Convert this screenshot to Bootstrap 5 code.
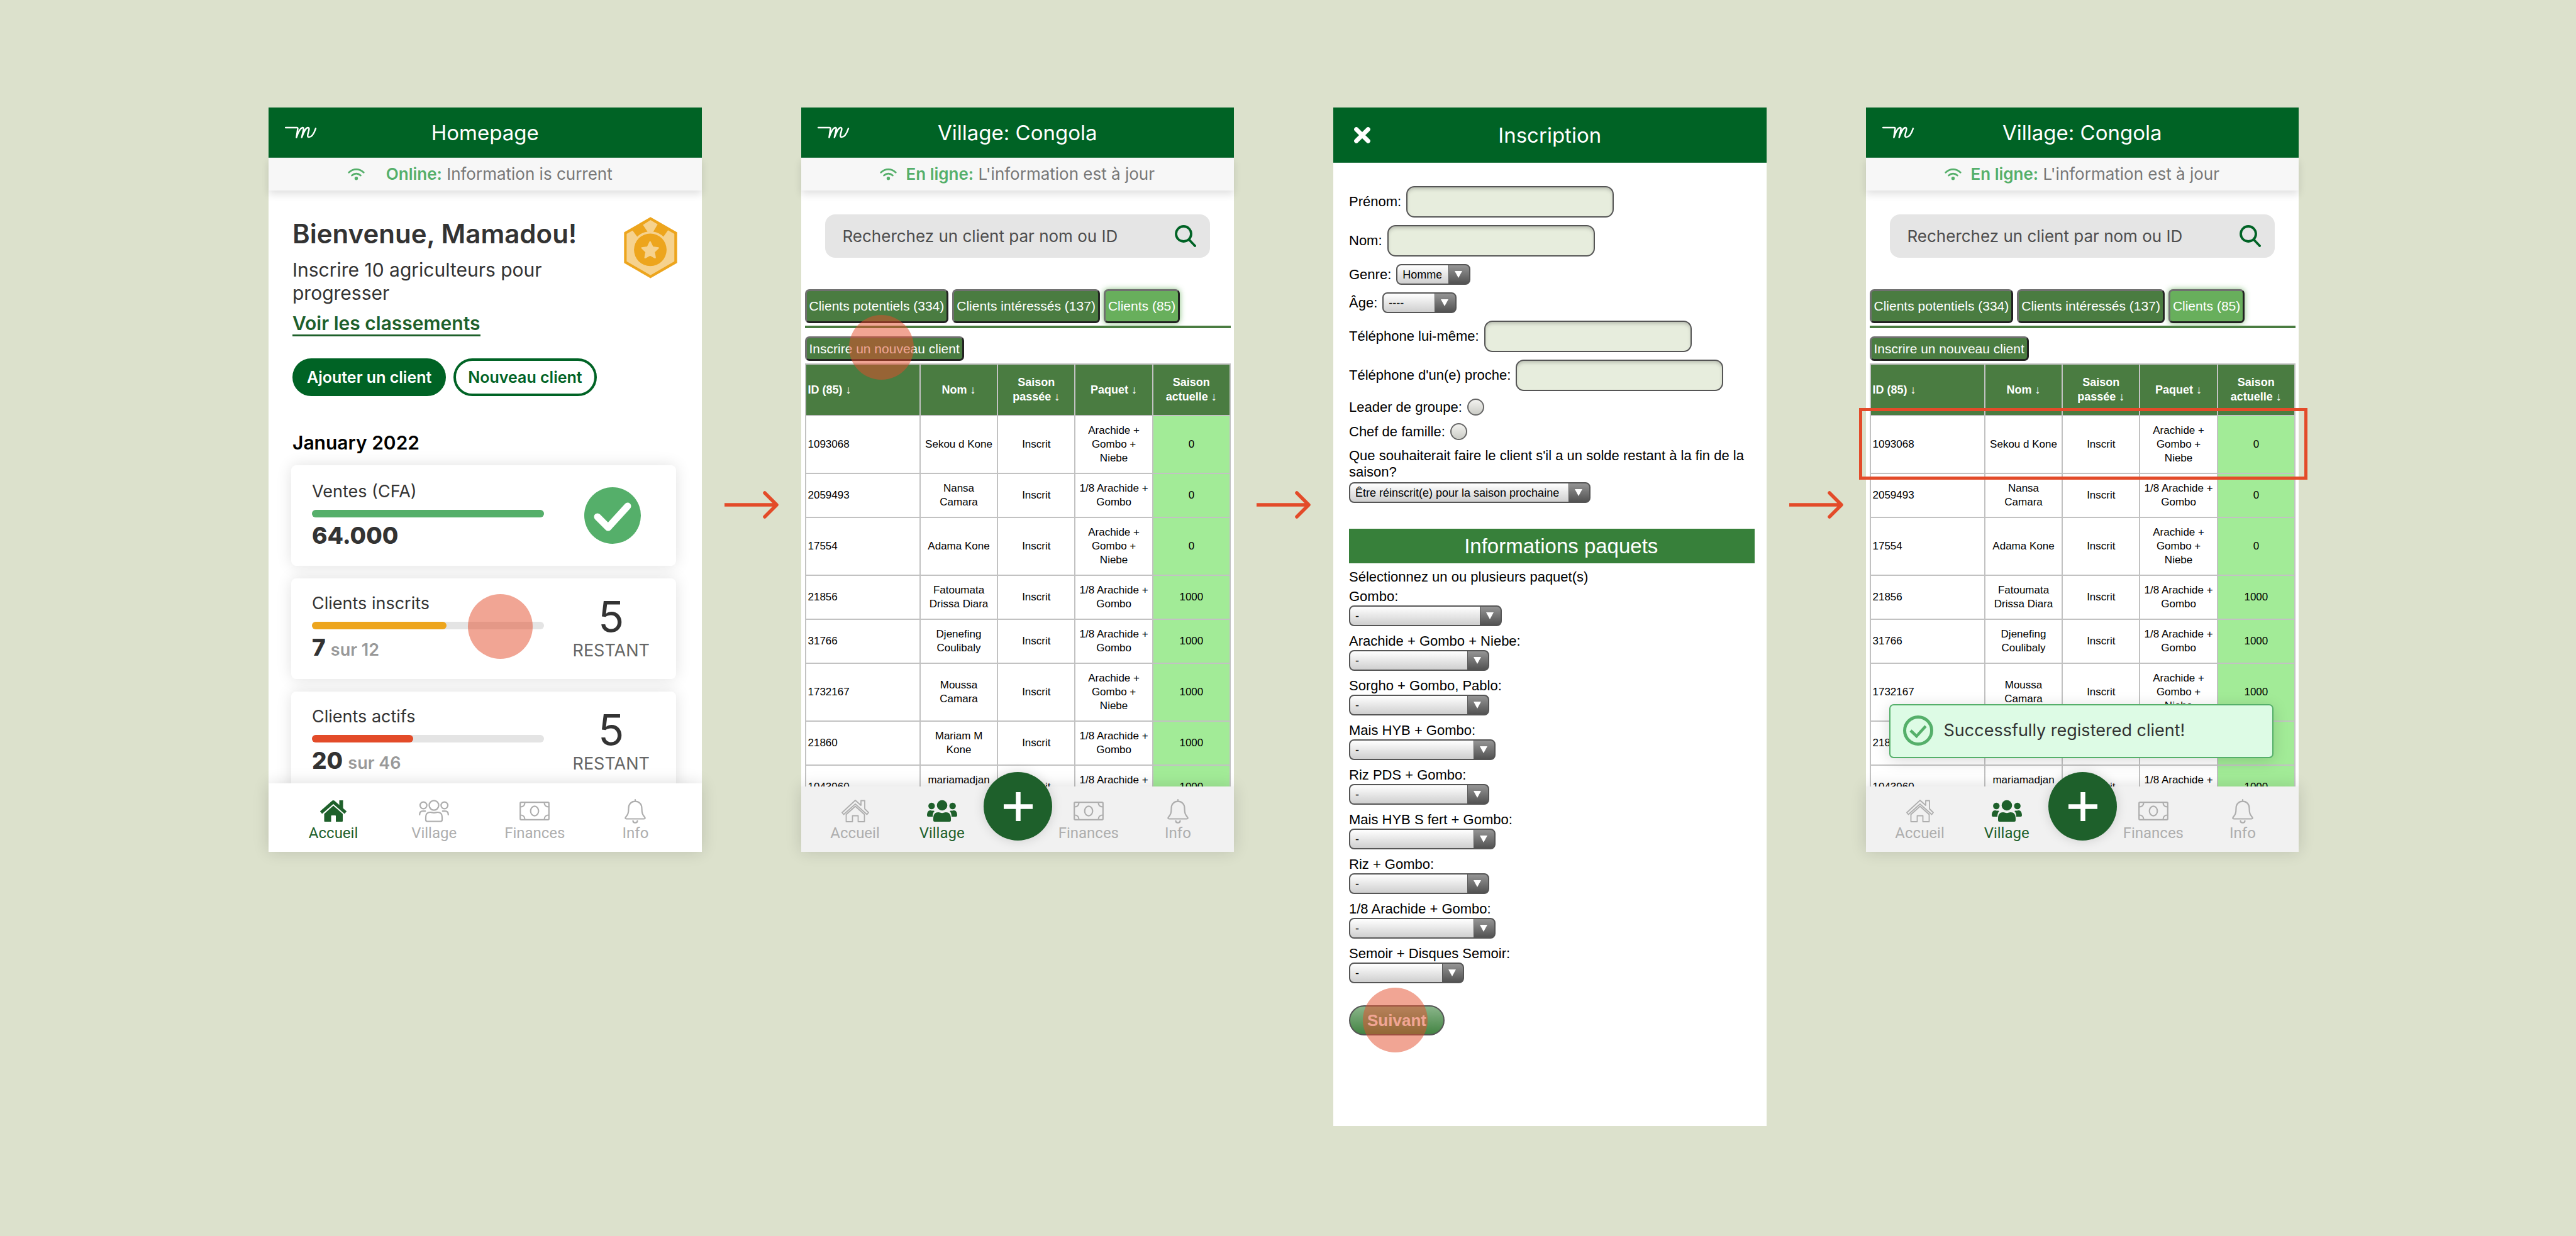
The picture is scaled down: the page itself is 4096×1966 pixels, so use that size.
<!DOCTYPE html>
<html lang="fr">
<head>
<meta charset="utf-8">
<meta name="viewport" content="width=device-width, initial-scale=1">
<title>Parcours d'inscription d'un client</title>
<link href="https://cdn.jsdelivr.net/npm/bootstrap@5.3.0/dist/css/bootstrap.min.css" rel="stylesheet">
<style>
  :root {
    --brand: #006325;
    --brand-dark: #1e602b;
    --ok: #55af6a;
    --alert: #e34b29;
    --tab: #4a7c41;
    --ink: #333;
  }
  body { background: #dce1cc; font-family: Inter, "Liberation Sans", sans-serif; color: var(--ink); }
  .flow { padding: 171px 441px 0 427px; }
  .link-arrow { flex: 0 0 158px; padding-top: 610px; }
  .phone { flex: 1 1 0; min-width: 0; background: #fff; }
  .phone-short { height: 1184px; }
  .screen { min-height: 0; }
  .topbar { height: 80px; background: var(--brand); color: #fff; border-bottom: 1px solid #2f7d4d; }
  .topbar-tall { height: 88px; }
  .topbar h1 { font-size: 33px; line-height: 40px; font-weight: 400; }
  .topbar .corner { left: 26px; top: 0; height: 100%; }
  .status { height: 52px; background: #f7f7f7; color: #777; font-size: 26px; line-height: 32px; box-shadow: 0 6px 12px rgba(0,0,0,.12); z-index: 2; }
  .status svg, .status strong, .toast-ok svg { color: var(--ok); }
  .status strong { font-weight: 600; }
  .status-wide { gap: 34px; padding-right: 16px; }
  .status-near { gap: 14px; }

  .intro { padding: 42px 39px 0 38px; }
  .intro h2 { font-size: 42px; line-height: 54px; font-weight: 600; }
  .intro p { font-size: 30px; line-height: 37px; margin: 12px 0 12px; }
  .ranking { font-size: 30px; line-height: 35px; font-weight: 600; color: var(--brand-dark); border-bottom: 3px solid var(--brand-dark); }
  .pills { gap: 12px; margin-top: 35px; }
  .pill { height: 60px; border-radius: 30px; border: 4px solid var(--brand); font-size: 25px; line-height: 30px; font-weight: 600; padding: 0 19px; color: var(--brand); }
  .pill-full { background: var(--brand); color: #fff; }
  .month { font-size: 30px; line-height: 37px; font-weight: 600; color: #000; margin: 56px 0 17px; }
  .stats { padding: 0 41px 0 36px; gap: 20px; }
  .stat { height: 160px; border-radius: 8px; padding: 0 0 0 33px; box-shadow: 0 0 24px rgba(0,0,0,.12); background: #fff; flex: none; }
  .stat-name { font-size: 27px; line-height: 32px; }
  .meter { width: 369px; height: 12px; border-radius: 6px; background: #e4e4e4; margin: 13px 0 7px; }
  .meter > div { border-radius: 6px; }
  .stat-num { font-size: 37px; line-height: 44px; font-weight: 800; }
  .stat-num small { font-size: 27px; font-weight: 600; color: #999; }
  .left-count { padding-bottom: 4px; }
  .left-num { font-size: 68px; line-height: 68px; }
  .left-word { font-size: 27px; line-height: 32px; margin-top: 5px; color: #666; }
  .fill-green { background: var(--ok); }
  .fill-amber { background: #eda51d; }
  .fill-red { background: var(--alert); }

  .tabbar { padding-bottom: 18px; z-index: 3; box-shadow: 0 0 24px rgba(0,0,0,.14); font-size: 24px; line-height: 24px; }
  .tabbar a { color: #aeaeae; text-decoration: none; font-family: Roboto, Inter, sans-serif; }
  .tabbar a.on { color: var(--brand-dark); }
  .tabbar .ico { height: 40px; margin-bottom: 3px; }
  .tabbar-home { height: 109px; background: #fff; padding-left: 23px; padding-right: 25px; }
  .tabbar-village { height: 104px; background: #f1f1f1; }
  .w-1 { flex: 152 0 0; padding-left: 10px; } .w-2 { flex: 124 0 0; } .w-3 { flex: 118 0 0; } .w-4 { flex: 106 0 0; } .w-5 { flex: 178 0 0; }
  .add { width: 109px; height: 109px; flex: none; border: 0; border-radius: 50%; background: var(--brand-dark); box-shadow: 0 0 18px rgba(0,0,0,.15); }

  .search { margin: 38px 38px 0; height: 69px; border-radius: 16px; background: #e5e5e5; padding: 0 22px 0 28px; }
  .search input { border: 0; background: none; outline: 0; font-size: 26px; color: #4d4d4d; min-width: 0; padding: 0; }
  .search input::placeholder { color: #4d4d4d; opacity: 1; }
  .search svg { color: var(--brand); }
  .legacy { font-family: "Liberation Sans", Arial, sans-serif; color: #000; }
  .village { padding: 0 5px 0 6px; }
  .tabs { margin-top: 50px; gap: 6px; }
  .lbtn { font-size: 21px; line-height: 24px; color: #fff; background: var(--tab); border: 3px solid; border-color: #707070 #222 #222 #707070; border-radius: 7px; padding: 0 4px; height: 54px; white-space: nowrap; }
  .lbtn-on { background: #68af5c; box-shadow: 0 0 10px rgba(104,175,92,.8); }
  .lbtn-low { height: 39px; }
  .rule { height: 4px; background: var(--tab); margin: 4px 0 13px; }
  .clients { width: 100%; table-layout: fixed; border-collapse: collapse; font-size: 17px; line-height: 22px; text-align: center; margin-top: 4px; }
  .clients th { background: var(--tab); color: #fff; height: 82px; font-size: 18px; line-height: 23px; padding: 0 4px; }
  .clients th, .clients td { border: 2px solid #c2c2c2; vertical-align: middle; }
  .clients td { padding: 12px 1px; white-space: nowrap; }
  .clients th:first-child, .clients td:first-child { text-align: left; padding-left: 3px; }
  .clients td:last-child { background: #a2eb97; }
  .clients .c1 { width: 27%; }

  .tap { width: 103px; height: 103px; border-radius: 50%; background: rgba(227,75,41,.5); z-index: 5; pointer-events: none; }
  .tap-stat { left: 281px; top: 25px; }
  .tap-new { left: 70px; top: -34px; }
  .tap-next { left: 22px; top: -28px; }

  .form { padding: 37px 19px 144px 25px; }
  .fields { gap: 12px; }
  .line { gap: 8px; font-size: 22px; line-height: 26px; }
  .box { width: 330px; height: 50px; border: 2px solid #555; border-radius: 13px; background: #e7eddd; box-shadow: inset 0 4px 6px -2px rgba(0,0,0,.25); padding: 0 12px; }
  .pick { appearance: none; height: 33px; border: 2px solid #555; border-radius: 8px; font-size: 18px; line-height: 22px; color: #000; padding: 0 44px 0 8px;
    background:
      url("data:image/svg+xml,%3Csvg xmlns='http://www.w3.org/2000/svg' width='12' height='11'%3E%3Cpath d='M0 0h12l-6 11z' fill='%23fff'/%3E%3C/svg%3E") no-repeat right 11px center,
      linear-gradient(#555, #555) no-repeat right 32px top / 1px 100%,
      linear-gradient(#959595, #525252) no-repeat right top / 33px 100%,
      linear-gradient(#fff, #cfcfcf); }
  .pick-a { width: 118px; } .pick-b { width: 384px; } .pick-c { width: 243px; } .pick-d { width: 223px; } .pick-e { width: 233px; } .pick-f { width: 183px; }
  .dot { appearance: none; width: 27px; height: 27px; border: 2px solid #666; border-radius: 50%; background: linear-gradient(#f3f3f0, #cbccc6); margin: 0; }
  .long-label { font-size: 22px; line-height: 26px; margin: 0 0 -9px; }
  .banner { background: #37803a; color: #fff; font-size: 33px; line-height: 55px; font-weight: 400; text-align: center; padding-left: 30px; margin: 41px 0 9px; }
  .pack { font-size: 22px; line-height: 26px; }
  .packs { gap: 11px; margin-top: 5px; }
  .packs label { margin-bottom: 1px; }
  .send { margin-top: 35px; }
  .next { height: 48px; width: 152px; border: 2px solid #555; border-radius: 24px; background: linear-gradient(#8ab58a, #438443); color: #fff; font-size: 26px; line-height: 30px; font-weight: 700; padding: 0; }

  .toast-ok { left: 37px; right: 40px; top: 949px; height: 86px; border: 2px solid var(--ok); border-radius: 7px; background: #ddfbe5; box-shadow: 0 4px 24px rgba(0,0,0,.15); font-size: 27px; line-height: 32px; gap: 17px; padding: 0 0 3px 20px; z-index: 2; }
  .focus-row { left: -11px; right: -14px; top: 478px; height: 114px; border: 5px solid var(--alert); z-index: 4; }
</style>
</head>
<body>
<svg width="0" height="0" class="d-none" aria-hidden="true">
  <symbol id="i-logo" viewBox="0 0 50 20"><path d="M1 2.6h17.500c1.200 0 1.700.8 1.500 2L18 18c2-6 5.200-14.500 9.200-15.300 2.800-.4 1.800 3.300 1 6.500L26.200 18c2.500-6.500 5.500-14.800 9.500-15.300 2.900-.2 2 3.200 1.100 6.300-.9 3-2.700 8.500.7 8.500 4.800 0 8.500-7.500 10.500-13.500" fill="none" stroke="currentColor" stroke-width="2.400" stroke-linecap="round" stroke-linejoin="round"/></symbol>
  <symbol id="i-wifi" viewBox="0 0 27 20"><g fill="none" stroke="currentColor" stroke-width="2.800" stroke-linecap="round"><path d="M1.800 7.200c7-6.400 16.400-6.400 23.400 0"/><path d="M6.600 12c4.300-3.800 9.500-3.800 13.800 0"/></g><circle cx="13.500" cy="16.800" r="2.700" fill="currentColor"/></symbol>
  <symbol id="i-medal" viewBox="46 25 269 309"><path fill="#eda51d" d="M180 25l134 77v154l-134 77-133-77V102z"/><path fill="#f6d28e" d="M60 110l30-17 23 31q20-20 52-25l-23-34 38-25 36 22-22 37q30 5 51 25l23-32 32 18v138l-120 70-120-70z"/><circle cx="179" cy="190" r="82" fill="#eda51d"/><path d="M178 150l12.500 26.500 29 4-21 20.500 5 29-25.500-14-25.500 14 5-29-21-20.500 29-4z" fill="#f6d28e" stroke="#f6d28e" stroke-width="7" stroke-linejoin="round"/></symbol>
  <symbol id="i-home-on" viewBox="0 0 44 36"><path d="M2.500 20.500L22 3.500l19.500 17" fill="none" stroke="currentColor" stroke-width="5" stroke-linejoin="round"/><path fill="currentColor" d="M31.500 1h6v14l-6-5zM22 9.500l15 13V34q0 1-1 1H26V26q0-1-1-1h-5.500q-1 0-1 1v9H8.500q-1 0-1-1V22.500z"/></symbol>
  <symbol id="i-home" viewBox="0 0 44 36"><g fill="none" stroke="currentColor" stroke-width="1.800" stroke-linejoin="round"><path d="M1 20.500L22 1l9 8V1.500h6v13l6 6-2.500 3L22 6.800 3.500 23.500z"/><path d="M7.500 23.500V35h10V25.500h9V35h10V23.500L22 10.500z"/></g></symbol>
  <symbol id="i-group" viewBox="0 0 48 36"><g fill="none" stroke="currentColor" stroke-width="2.200" stroke-linecap="round"><circle cx="24" cy="9" r="7.600"/><circle cx="7.300" cy="9" r="5.400"/><circle cx="40.700" cy="9" r="5.400"/><path d="M11 32v-4c0-6 3-8 7-8 2 0 3.500.8 6 .8s4-.8 6-.8c4 0 7 2 7 8v4q0 2.500-2.500 2.500h-21Q11 34.500 11 32zM1.200 24c0-4 1.500-5.800 5-5.800h4M46.800 24c0-4-1.500-5.800-5-5.800h-4"/></g></symbol>
  <symbol id="i-group-on" viewBox="0 0 48 36"><g fill="currentColor"><circle cx="24" cy="9" r="8.300"/><circle cx="7.300" cy="10" r="5.200"/><circle cx="40.700" cy="10" r="5.200"/><path d="M10 33v-3c0-7 3-10 8-10 2 0 3.500 1.200 6 1.200s4-1.200 6-1.200c5 0 8 3 8 10v3q0 2-2 2H12q-2 0-2-2zM9 27H2q-2 0-2-2c0-5 2-8 5-8 1.500 0 2 .5 3.500.5S10.500 17 12 18c-2.500 2.500-3 6-3 9zM39 27h7q2 0 2-2c0-5-2-8-5-8-1.500 0-2 .5-3.500.5S37.500 17 36 18c2.500 2.500 3 6 3 9z"/></g></symbol>
  <symbol id="i-cash" viewBox="0 0 48 30"><g fill="none" stroke="currentColor" stroke-width="2.200"><rect x="1.200" y="1.200" width="45.600" height="27.600" rx="1.500"/><ellipse cx="24" cy="15" rx="6.300" ry="7.600"/><path d="M8.500 1.500c0 4-2.500 7-7 7M39.500 1.500c0 4 2.500 7 7 7M8.500 28.500c0-4-2.500-7-7-7M39.500 28.500c0-4 2.500-7 7-7"/></g></symbol>
  <symbol id="i-bell" viewBox="0 0 34 39"><g fill="none" stroke="currentColor" stroke-width="2.200" stroke-linecap="round" stroke-linejoin="round"><path d="M17 1.200v2.500M17 3.700c-6.500 0-10.500 4.500-10.500 11 0 8-1.500 10.500-4.500 14-1.300 1.600-.7 2.800 1 2.800h28c1.700 0 2.300-1.200 1-2.800-3-3.500-4.500-6-4.500-14 0-6.500-4-11-10.500-11zM13.500 34.500c0 1.800 1.500 3.200 3.500 3.200s3.500-1.400 3.500-3.200"/></g></symbol>
  <symbol id="i-search" viewBox="0 0 34 35"><g fill="none" stroke="currentColor" stroke-width="3.800" stroke-linecap="round"><circle cx="14" cy="14" r="12"/><path d="M23 23.500L32 33"/></g></symbol>
  <symbol id="i-plus" viewBox="0 0 46 46"><path d="M23 0v46M0 23h46" stroke="#fff" stroke-width="7.500"/></symbol>
  <symbol id="i-close" viewBox="0 0 24 24"><path d="M4 4l16 16M20 4L4 20" stroke="#fff" stroke-width="6" stroke-linecap="round"/></symbol>
  <symbol id="i-done" viewBox="0 0 90 90"><circle cx="45" cy="45" r="45" fill="#55af6a"/><path d="M21 47l17 17 31-34" fill="none" stroke="#fff" stroke-width="11" stroke-linejoin="round" stroke-linecap="round"/></symbol>
  <symbol id="i-ring" viewBox="0 0 48 48"><circle cx="24" cy="24" r="21.500" fill="none" stroke="currentColor" stroke-width="5"/><path d="M12 24l9.500 9L36 17" fill="none" stroke="currentColor" stroke-width="4.500"/></symbol>
  <symbol id="i-arrow" viewBox="0 0 86 44"><path d="M0 22h82M64 3l19 19-19 19" fill="none" stroke="#e34b29" stroke-width="5.500" stroke-linecap="round" stroke-linejoin="round"/></symbol>
</svg>

<main class="flow d-flex align-items-start">

  <section class="phone phone-short d-flex flex-column">
    <header class="topbar position-relative d-flex align-items-center justify-content-center flex-shrink-0">
      <span class="corner position-absolute d-flex align-items-center"><svg width="51" height="21" role="img" aria-label="Logo"><use href="#i-logo"/></svg></span>
      <h1 class="m-0">Homepage</h1>
    </header>
    <div class="status status-wide position-relative d-flex align-items-center justify-content-center flex-shrink-0">
      <svg width="27" height="20"><use href="#i-wifi"/></svg>
      <span><strong>Online:</strong> Information is current</span>
    </div>
    <div class="screen flex-grow-1 overflow-hidden">
      <div class="intro">
        <div class="d-flex justify-content-between align-items-start">
          <div>
            <h2 class="m-0">Bienvenue, Mamadou!</h2>
            <p>Inscrire 10 agriculteurs pour<br>progresser</p>
          </div>
          <svg width="85" height="98" role="img" aria-label="Médaille"><use href="#i-medal"/></svg>
        </div>
        <a href="#" class="ranking d-inline-block text-decoration-none">Voir les classements</a>
        <div class="pills d-flex">
          <button type="button" class="pill pill-full">Ajouter un client</button>
          <button type="button" class="pill bg-white">Nouveau client</button>
        </div>
        <h3 class="month">January 2022</h3>
      </div>
      <div class="stats d-flex flex-column">
        <article class="stat d-flex align-items-center">
          <div>
            <div class="stat-name">Ventes (CFA)</div>
            <div class="meter"><div class="fill-green h-100" style="width:100%"></div></div>
            <div class="stat-num">64.000</div>
          </div>
          <div class="flex-grow-1 text-center ps-2"><svg width="90" height="90" role="img" aria-label="Atteint"><use href="#i-done"/></svg></div>
        </article>
        <article class="stat d-flex align-items-center position-relative">
          <div>
            <div class="stat-name">Clients inscrits</div>
            <div class="meter"><div class="fill-amber h-100" style="width:58%"></div></div>
            <div class="stat-num">7 <small>sur 12</small></div>
          </div>
          <div class="left-count flex-grow-1 text-center ps-1"><div class="left-num">5</div><div class="left-word">RESTANT</div></div>
          <span class="tap tap-stat position-absolute"></span>
        </article>
        <article class="stat d-flex align-items-center">
          <div>
            <div class="stat-name">Clients actifs</div>
            <div class="meter"><div class="fill-red h-100" style="width:43.5%"></div></div>
            <div class="stat-num">20 <small>sur 46</small></div>
          </div>
          <div class="left-count flex-grow-1 text-center ps-1"><div class="left-num">5</div><div class="left-word">RESTANT</div></div>
        </article>
      </div>
    </div>
    <nav class="tabbar tabbar-home position-relative d-flex align-items-end flex-shrink-0 text-center">
      <a href="#" class="on flex-fill w-25"><span class="ico d-flex align-items-center justify-content-center"><svg width="44" height="36"><use href="#i-home-on"/></svg></span>Accueil</a>
      <a href="#" class="flex-fill w-25"><span class="ico d-flex align-items-center justify-content-center"><svg width="48" height="36"><use href="#i-group"/></svg></span>Village</a>
      <a href="#" class="flex-fill w-25"><span class="ico d-flex align-items-center justify-content-center"><svg width="48" height="30"><use href="#i-cash"/></svg></span>Finances</a>
      <a href="#" class="flex-fill w-25"><span class="ico d-flex align-items-center justify-content-center"><svg width="34" height="39"><use href="#i-bell"/></svg></span>Info</a>
    </nav>
  </section>

  <div class="link-arrow text-center"><svg width="86" height="44"><use href="#i-arrow"/></svg></div>

  <section class="phone phone-short d-flex flex-column">
    <header class="topbar position-relative d-flex align-items-center justify-content-center flex-shrink-0">
      <span class="corner position-absolute d-flex align-items-center"><svg width="51" height="21" role="img" aria-label="Logo"><use href="#i-logo"/></svg></span>
      <h1 class="m-0">Village: Congola</h1>
    </header>
    <div class="status status-near position-relative d-flex align-items-center justify-content-center flex-shrink-0">
      <svg width="27" height="20"><use href="#i-wifi"/></svg>
      <span><strong>En ligne:</strong> L'information est à jour</span>
    </div>
    <div class="screen flex-grow-1 overflow-hidden">
      <form class="search d-flex align-items-center">
        <input type="search" class="flex-grow-1" aria-label="Recherche" placeholder="Recherchez un client par nom ou ID">
        <button type="button" class="border-0 bg-transparent p-0" aria-label="Rechercher"><svg width="34" height="35"><use href="#i-search"/></svg></button>
      </form>
      <div class="village legacy">
        <div class="tabs d-flex">
          <button type="button" class="lbtn">Clients potentiels (334)</button>
          <button type="button" class="lbtn">Clients intéressés (137)</button>
          <button type="button" class="lbtn lbtn-on">Clients (85)</button>
        </div>
        <div class="rule"></div>
        <div class="position-relative d-flex">
          <button type="button" class="lbtn lbtn-low">Inscrire un nouveau client</button>
          <span class="tap tap-new position-absolute"></span>
        </div>
        <table class="clients">
          <colgroup><col class="c1"><col><col><col><col></colgroup>
          <thead><tr><th>ID (85) ↓</th><th>Nom ↓</th><th>Saison passée&nbsp;↓</th><th>Paquet ↓</th><th>Saison actuelle&nbsp;↓</th></tr></thead>
          <tbody>
            <tr><td>1093068</td><td>Sekou d Kone</td><td>Inscrit</td><td>Arachide +<br>Gombo +<br>Niebe</td><td>0</td></tr>
            <tr><td>2059493</td><td>Nansa<br>Camara</td><td>Inscrit</td><td>1/8 Arachide +<br>Gombo</td><td>0</td></tr>
            <tr><td>17554</td><td>Adama Kone</td><td>Inscrit</td><td>Arachide +<br>Gombo +<br>Niebe</td><td>0</td></tr>
            <tr><td>21856</td><td>Fatoumata<br>Drissa Diara</td><td>Inscrit</td><td>1/8 Arachide +<br>Gombo</td><td>1000</td></tr>
            <tr><td>31766</td><td>Djenefing<br>Coulibaly</td><td>Inscrit</td><td>1/8 Arachide +<br>Gombo</td><td>1000</td></tr>
            <tr><td>1732167</td><td>Moussa<br>Camara</td><td>Inscrit</td><td>Arachide +<br>Gombo +<br>Niebe</td><td>1000</td></tr>
            <tr><td>21860</td><td>Mariam M<br>Kone</td><td>Inscrit</td><td>1/8 Arachide +<br>Gombo</td><td>1000</td></tr>
            <tr><td>1043960</td><td>mariamadjan<br>&nbsp;</td><td>Inscrit</td><td>1/8 Arachide +<br>&nbsp;</td><td>1000</td></tr>
          </tbody>
        </table>
      </div>
    </div>
    <nav class="tabbar tabbar-village position-relative d-flex align-items-end flex-shrink-0 text-center">
      <a href="#" class="w-1"><span class="ico d-flex align-items-center justify-content-center"><svg width="44" height="36"><use href="#i-home"/></svg></span>Accueil</a>
      <a href="#" class="on w-2"><span class="ico d-flex align-items-center justify-content-center"><svg width="48" height="36"><use href="#i-group-on"/></svg></span>Village</a>
      <div class="w-3 d-flex justify-content-center"><button type="button" class="add p-0" aria-label="Ajouter"><svg width="46" height="46"><use href="#i-plus"/></svg></button></div>
      <a href="#" class="w-4"><span class="ico d-flex align-items-center justify-content-center"><svg width="48" height="30"><use href="#i-cash"/></svg></span>Finances</a>
      <a href="#" class="w-5"><span class="ico d-flex align-items-center justify-content-center"><svg width="34" height="39"><use href="#i-bell"/></svg></span>Info</a>
    </nav>
  </section>

  <div class="link-arrow text-center"><svg width="86" height="44"><use href="#i-arrow"/></svg></div>

  <section class="phone">
    <header class="topbar topbar-tall position-relative d-flex align-items-center justify-content-center">
      <button type="button" class="corner position-absolute d-flex align-items-center border-0 bg-transparent" aria-label="Fermer"><svg width="28" height="28"><use href="#i-close"/></svg></button>
      <h1 class="m-0">Inscription</h1>
    </header>
    <form class="form legacy">
      <div class="fields d-flex flex-column align-items-start">
        <div class="line d-flex align-items-center"><label for="prenom">Prénom:</label><input id="prenom" type="text" class="box"></div>
        <div class="line d-flex align-items-center"><label for="nom">Nom:</label><input id="nom" type="text" class="box"></div>
        <div class="line d-flex align-items-center"><label for="genre">Genre:</label><select id="genre" class="pick pick-a"><option>Homme</option><option>Femme</option></select></div>
        <div class="line d-flex align-items-center"><label for="age">Âge:</label><select id="age" class="pick pick-a"><option>----</option></select></div>
        <div class="line d-flex align-items-center"><label for="tel1">Téléphone lui-même:</label><input id="tel1" type="tel" class="box"></div>
        <div class="line d-flex align-items-center"><label for="tel2">Téléphone d'un(e) proche:</label><input id="tel2" type="tel" class="box"></div>
        <div class="line d-flex align-items-center"><label for="leader">Leader de groupe:</label><input id="leader" type="radio" class="dot"></div>
        <div class="line d-flex align-items-center"><label for="chef">Chef de famille:</label><input id="chef" type="radio" class="dot"></div>
        <label for="solde" class="long-label">Que souhaiterait faire le client s'il a un solde restant à la fin de la saison?</label>
        <select id="solde" class="pick pick-b"><option>Être réinscrit(e) pour la saison prochaine</option></select>
      </div>
      <h2 class="banner">Informations paquets</h2>
      <div class="pack">Sélectionnez un ou plusieurs paquet(s)</div>
      <div class="packs d-flex flex-column">
        <div class="pack d-flex flex-column align-items-start"><label for="p1">Gombo:</label><select id="p1" class="pick pick-c"><option>-</option></select></div>
        <div class="pack d-flex flex-column align-items-start"><label for="p2">Arachide + Gombo + Niebe:</label><select id="p2" class="pick pick-d"><option>-</option></select></div>
        <div class="pack d-flex flex-column align-items-start"><label for="p3">Sorgho + Gombo, Pablo:</label><select id="p3" class="pick pick-d"><option>-</option></select></div>
        <div class="pack d-flex flex-column align-items-start"><label for="p4">Mais HYB + Gombo:</label><select id="p4" class="pick pick-e"><option>-</option></select></div>
        <div class="pack d-flex flex-column align-items-start"><label for="p5">Riz PDS + Gombo:</label><select id="p5" class="pick pick-d"><option>-</option></select></div>
        <div class="pack d-flex flex-column align-items-start"><label for="p6">Mais HYB S fert + Gombo:</label><select id="p6" class="pick pick-e"><option>-</option></select></div>
        <div class="pack d-flex flex-column align-items-start"><label for="p7">Riz + Gombo:</label><select id="p7" class="pick pick-d"><option>-</option></select></div>
        <div class="pack d-flex flex-column align-items-start"><label for="p8">1/8 Arachide + Gombo:</label><select id="p8" class="pick pick-e"><option>-</option></select></div>
        <div class="pack d-flex flex-column align-items-start"><label for="p9">Semoir + Disques Semoir:</label><select id="p9" class="pick pick-f"><option>-</option></select></div>
      </div>
      <div class="send position-relative d-flex">
        <button type="button" class="next">Suivant</button>
        <span class="tap tap-next position-absolute"></span>
      </div>
    </form>
  </section>

  <div class="link-arrow text-center"><svg width="86" height="44"><use href="#i-arrow"/></svg></div>

  <section class="phone phone-short d-flex flex-column position-relative">
    <header class="topbar position-relative d-flex align-items-center justify-content-center flex-shrink-0">
      <span class="corner position-absolute d-flex align-items-center"><svg width="51" height="21" role="img" aria-label="Logo"><use href="#i-logo"/></svg></span>
      <h1 class="m-0">Village: Congola</h1>
    </header>
    <div class="status status-near position-relative d-flex align-items-center justify-content-center flex-shrink-0">
      <svg width="27" height="20"><use href="#i-wifi"/></svg>
      <span><strong>En ligne:</strong> L'information est à jour</span>
    </div>
    <div class="screen flex-grow-1 overflow-hidden">
      <form class="search d-flex align-items-center">
        <input type="search" class="flex-grow-1" aria-label="Recherche" placeholder="Recherchez un client par nom ou ID">
        <button type="button" class="border-0 bg-transparent p-0" aria-label="Rechercher"><svg width="34" height="35"><use href="#i-search"/></svg></button>
      </form>
      <div class="village legacy">
        <div class="tabs d-flex">
          <button type="button" class="lbtn">Clients potentiels (334)</button>
          <button type="button" class="lbtn">Clients intéressés (137)</button>
          <button type="button" class="lbtn lbtn-on">Clients (85)</button>
        </div>
        <div class="rule"></div>
        <div class="d-flex">
          <button type="button" class="lbtn lbtn-low">Inscrire un nouveau client</button>
        </div>
        <table class="clients">
          <colgroup><col class="c1"><col><col><col><col></colgroup>
          <thead><tr><th>ID (85) ↓</th><th>Nom ↓</th><th>Saison passée&nbsp;↓</th><th>Paquet ↓</th><th>Saison actuelle&nbsp;↓</th></tr></thead>
          <tbody>
            <tr><td>1093068</td><td>Sekou d Kone</td><td>Inscrit</td><td>Arachide +<br>Gombo +<br>Niebe</td><td>0</td></tr>
            <tr><td>2059493</td><td>Nansa<br>Camara</td><td>Inscrit</td><td>1/8 Arachide +<br>Gombo</td><td>0</td></tr>
            <tr><td>17554</td><td>Adama Kone</td><td>Inscrit</td><td>Arachide +<br>Gombo +<br>Niebe</td><td>0</td></tr>
            <tr><td>21856</td><td>Fatoumata<br>Drissa Diara</td><td>Inscrit</td><td>1/8 Arachide +<br>Gombo</td><td>1000</td></tr>
            <tr><td>31766</td><td>Djenefing<br>Coulibaly</td><td>Inscrit</td><td>1/8 Arachide +<br>Gombo</td><td>1000</td></tr>
            <tr><td>1732167</td><td>Moussa<br>Camara</td><td>Inscrit</td><td>Arachide +<br>Gombo +<br>Niebe</td><td>1000</td></tr>
            <tr><td>21860</td><td>&nbsp;<br>&nbsp;</td><td></td><td></td><td></td></tr>
            <tr><td>1043960</td><td>mariamadjan<br>&nbsp;</td><td>Inscrit</td><td>1/8 Arachide +<br>&nbsp;</td><td>1000</td></tr>
          </tbody>
        </table>
      </div>
    </div>
    <nav class="tabbar tabbar-village position-relative d-flex align-items-end flex-shrink-0 text-center">
      <a href="#" class="w-1"><span class="ico d-flex align-items-center justify-content-center"><svg width="44" height="36"><use href="#i-home"/></svg></span>Accueil</a>
      <a href="#" class="on w-2"><span class="ico d-flex align-items-center justify-content-center"><svg width="48" height="36"><use href="#i-group-on"/></svg></span>Village</a>
      <div class="w-3 d-flex justify-content-center"><button type="button" class="add p-0" aria-label="Ajouter"><svg width="46" height="46"><use href="#i-plus"/></svg></button></div>
      <a href="#" class="w-4"><span class="ico d-flex align-items-center justify-content-center"><svg width="48" height="30"><use href="#i-cash"/></svg></span>Finances</a>
      <a href="#" class="w-5"><span class="ico d-flex align-items-center justify-content-center"><svg width="34" height="39"><use href="#i-bell"/></svg></span>Info</a>
    </nav>
    <div class="toast-ok position-absolute d-flex align-items-center" role="status">
      <svg width="48" height="48"><use href="#i-ring"/></svg>
      <span>Successfully registered client!</span>
    </div>
    <div class="focus-row position-absolute"></div>
  </section>
</main>
<script src="https://cdn.jsdelivr.net/npm/bootstrap@5.3.0/dist/js/bootstrap.bundle.min.js"></script>
</body>
</html>
